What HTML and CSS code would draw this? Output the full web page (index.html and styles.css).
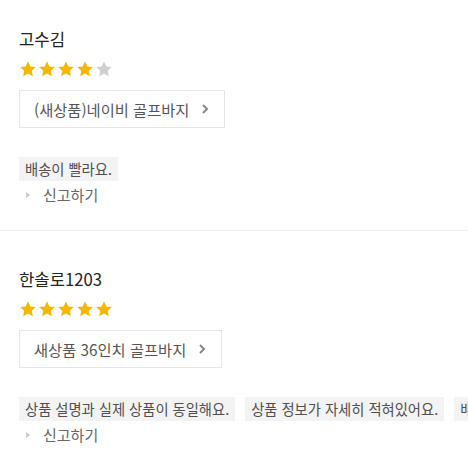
FILE: index.html
```html
<!DOCTYPE html>
<html lang="ko">
<head>
<meta charset="utf-8">
<link rel="stylesheet" href="styles.css">
</head>
<body>
<div class="list">
  <section class="review">
    <div class="name">고수김</div>
    <div class="stars">
      <svg class="star on" viewBox="0 0 20 20"><path d="M10 1.5l2.6 5.6 6.1.7-4.5 4.2 1.2 6.1L10 15l-5.4 3.1 1.2-6.1L1.3 7.8l6.1-.7z"/></svg>
      <svg class="star on" viewBox="0 0 20 20"><path d="M10 1.5l2.6 5.6 6.1.7-4.5 4.2 1.2 6.1L10 15l-5.4 3.1 1.2-6.1L1.3 7.8l6.1-.7z"/></svg>
      <svg class="star on" viewBox="0 0 20 20"><path d="M10 1.5l2.6 5.6 6.1.7-4.5 4.2 1.2 6.1L10 15l-5.4 3.1 1.2-6.1L1.3 7.8l6.1-.7z"/></svg>
      <svg class="star on" viewBox="0 0 20 20"><path d="M10 1.5l2.6 5.6 6.1.7-4.5 4.2 1.2 6.1L10 15l-5.4 3.1 1.2-6.1L1.3 7.8l6.1-.7z"/></svg>
      <svg class="star off" viewBox="0 0 20 20"><path d="M10 1.5l2.6 5.6 6.1.7-4.5 4.2 1.2 6.1L10 15l-5.4 3.1 1.2-6.1L1.3 7.8l6.1-.7z"/></svg>
    </div>
    <div class="product">
      <span>(새상품)네이비 골프바지</span>
      <svg class="chev" viewBox="0 0 8 12"><path d="M2 2l4 4-4 4"/></svg>
    </div>
    <div class="tags">
      <span class="tag">배송이 빨라요.</span>
    </div>
    <div class="report"><span class="tri"></span>신고하기</div>
  </section>
  <section class="review">
    <div class="name">한솔로1203</div>
    <div class="stars">
      <svg class="star on" viewBox="0 0 20 20"><path d="M10 1.5l2.6 5.6 6.1.7-4.5 4.2 1.2 6.1L10 15l-5.4 3.1 1.2-6.1L1.3 7.8l6.1-.7z"/></svg>
      <svg class="star on" viewBox="0 0 20 20"><path d="M10 1.5l2.6 5.6 6.1.7-4.5 4.2 1.2 6.1L10 15l-5.4 3.1 1.2-6.1L1.3 7.8l6.1-.7z"/></svg>
      <svg class="star on" viewBox="0 0 20 20"><path d="M10 1.5l2.6 5.6 6.1.7-4.5 4.2 1.2 6.1L10 15l-5.4 3.1 1.2-6.1L1.3 7.8l6.1-.7z"/></svg>
      <svg class="star on" viewBox="0 0 20 20"><path d="M10 1.5l2.6 5.6 6.1.7-4.5 4.2 1.2 6.1L10 15l-5.4 3.1 1.2-6.1L1.3 7.8l6.1-.7z"/></svg>
      <svg class="star on" viewBox="0 0 20 20"><path d="M10 1.5l2.6 5.6 6.1.7-4.5 4.2 1.2 6.1L10 15l-5.4 3.1 1.2-6.1L1.3 7.8l6.1-.7z"/></svg>
    </div>
    <div class="product">
      <span>새상품 36인치 골프바지</span>
      <svg class="chev" viewBox="0 0 8 12"><path d="M2 2l4 4-4 4"/></svg>
    </div>
    <div class="tags">
      <span class="tag">상품 설명과 실제 상품이 동일해요.</span>
      <span class="tag">상품 정보가 자세히 적혀있어요.</span>
      <span class="tag">배송이 빨라요.</span>
    </div>
    <div class="report"><span class="tri"></span>신고하기</div>
  </section>
</div>
</body>
</html>
```

FILE: styles.css
```css
* { box-sizing: border-box; }
html, body { margin: 0; padding: 0; background: #fff; }
body {
  font-family: "Noto Sans CJK KR", "Noto Sans", sans-serif;
  color: #222;
  overflow: hidden;
  width: 468px;
  height: 468px;
}
.list { display: flex; flex-direction: column; }
.review {
  padding: 27px 0 22px 19px;
  border-bottom: 1px solid #ebebeb;
  display: flex;
  flex-direction: column;
  align-items: flex-start;
  overflow: hidden;
}
.review + .review { padding-top: 36px; }
.name {
  font-size: 16.7px;
  line-height: 24px;
  color: #222;
}
.stars {
  display: flex;
  gap: 1px;
  margin-top: 9px;
  height: 18px;
  align-items: center;
}
.star { width: 18px; height: 18px; }
.star.on path { fill: #f5b800; }
.star.off path { fill: #cfcfcf; }
.product {
  margin-top: 12px;
  border: 1px solid #e6e6e6;
  height: 38px;
  display: flex;
  align-items: center;
  padding: 0 15px 0 14px;
  gap: 12px;
  font-size: 15.3px;
  color: #555;
}
.chev { width: 8px; height: 12px; }
.chev path { fill: none; stroke: #888; stroke-width: 2; }
.tags {
  margin-top: 29px;
  display: flex;
  gap: 10px;
  white-space: nowrap;
  max-width: 449px;
  overflow: hidden;
}
.tag {
  background: #f3f3f3;
  color: #4f4f4f;
  font-size: 14.3px;
  line-height: 24px;
  height: 24px;
  padding: 0 6px;
  flex: none;
}
.report {
  display: flex;
  align-items: center;
  font-size: 15px;
  color: #666;
  line-height: 26px;
  padding-left: 7px;
  margin-top: 1px;
}
.tri {
  width: 0; height: 0;
  border-left: 4px solid #c8c8c8;
  border-top: 3px solid transparent;
  border-bottom: 3px solid transparent;
  margin-right: 13px;
}
```
